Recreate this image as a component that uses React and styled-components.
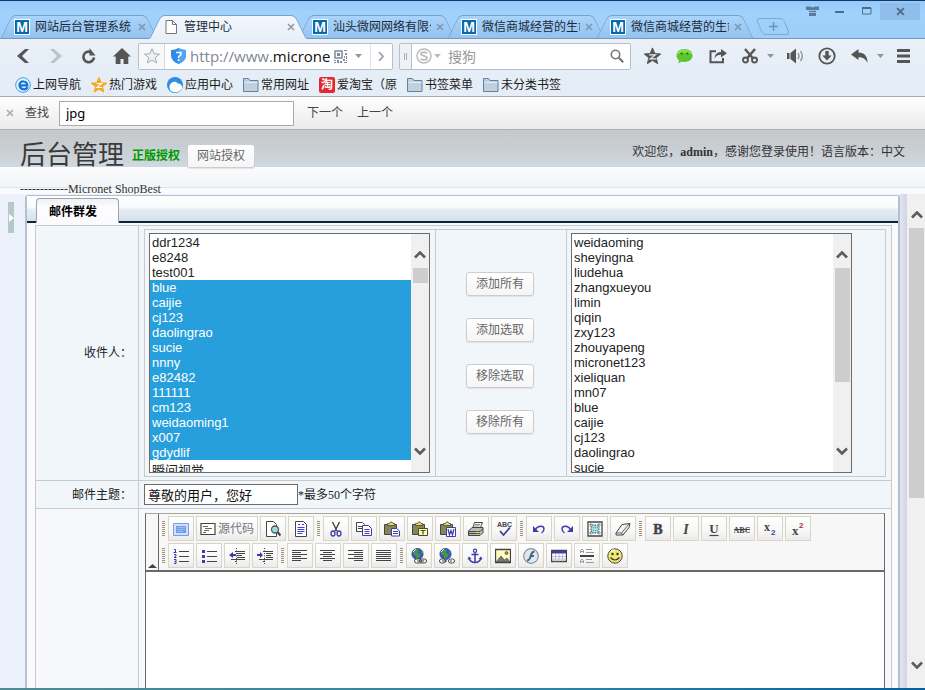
import React from "react";
import styled, { createGlobalStyle, css } from "styled-components";

const sans = '"Noto Sans", "Noto Sans CJK SC", sans-serif';
const song = '"Liberation Serif", "Noto Sans CJK SC", serif';
const arial = '"Liberation Sans", "Noto Sans CJK SC", sans-serif';

const GlobalStyle = createGlobalStyle`
  *, *::before, *::after { box-sizing: border-box; }
  body { margin: 0; font: 12px/16px ${sans}; color: #222; }
  button, input, select { font: inherit; color: inherit; margin: 0; }
  button { padding: 0; border: 0; background: none; }
  svg { display: block; flex: none; }
`;

/* ---------- browser frame ---------- */

const Window = styled.div`
  display: flex;
  flex-direction: column;
  height: 100vh;
  overflow: hidden;
  border-top: 1px solid #0b3a75;
  background: #9fcffb;
`;

const TitleBar = styled.header`
  display: flex;
  justify-content: space-between;
  align-items: flex-start;
  height: 38px;
  background: linear-gradient(#98c9f6, #a1d1fd 12px, #9dcefa);
  border-bottom: 1px solid #7898ba;
`;

const TabList = styled.nav`
  display: flex;
  align-items: flex-end;
  height: 38px;
`;

const tabFace = css`
  content: "";
  position: absolute;
  top: 0;
  bottom: 0;
  z-index: -1;
  border: 1px solid #7c9fc4;
  background: ${(p) => (p.$active ? "linear-gradient(#f2f7fd, #e9f0f8)" : "linear-gradient(#a9d4fb, #93c3f0)")};
  border-bottom-color: ${(p) => (p.$active ? "#e9f0f8" : "#7898ba")};
`;

const Tab = styled.div`
  position: relative;
  isolation: isolate;
  z-index: ${(p) => (p.$active ? 2 : 1)};
  display: flex;
  align-items: center;
  width: 158px;
  height: 24px;
  margin-right: -9px;
  padding: 0 11px 0 14px;
  color: #1c2a3a;
  &::before { ${tabFace} left: 6px; right: 40%; border-right: 0; border-top-left-radius: 5px; transform: skewX(-26deg); }
  &::after { ${tabFace} left: 40%; right: 6px; border-left: 0; border-top-right-radius: 5px; transform: skewX(26deg); }
`;

const TabTitle = styled.span`
  flex: 1;
  margin-left: 5px;
  overflow: hidden;
  white-space: nowrap;
`;

const TabClose = styled.button`
  display: flex;
  margin-left: 4px;
  padding: 1px;
`;

const Favicon = styled.span`
  width: 16px;
  height: 16px;
  border: 1px solid #fff;
  background: #0868ae;
  color: #fff;
  font: bold 14px/14px ${arial};
  text-align: center;
`;

const NewTab = styled.button`
  position: relative;
  isolation: isolate;
  display: flex;
  align-items: center;
  justify-content: center;
  width: 28px;
  height: 17px;
  margin: 0 0 4px 14px;
  &::before {
    content: "";
    position: absolute;
    inset: 0;
    z-index: -1;
    border: 1px solid #82a8d0;
    border-radius: 4px;
    transform: skewX(22deg);
  }
`;

const WindowButtons = styled.div`
  display: flex;
  align-items: center;
  height: 18px;
  padding-top: 2px;
`;

const WindowButton = styled.button`
  display: flex;
  align-items: center;
  justify-content: center;
  width: ${(p) => (p.$close ? 40 : 27)}px;
  height: 17px;
  margin-right: ${(p) => (p.$close ? 5 : 0)}px;
  background: ${(p) => (p.$close ? "#90bde9" : "transparent")};
`;

const NavBar = styled.div`
  display: flex;
  align-items: center;
  height: 34px;
  padding: 0 3px 0 6px;
  background: linear-gradient(#e9f0f8, #e5edf6);
`;

const NavButton = styled.button`
  display: flex;
  align-items: center;
  justify-content: center;
  width: 33px;
  height: 28px;
`;

const AddressBox = styled.div`
  display: flex;
  flex: 255 1 0;
  align-items: center;
  min-width: 0;
  height: 27px;
  border: 1px solid #b9bfc8;
  border-radius: 2px;
  background: #fff;
`;

const StarButton = styled.button`
  display: flex;
  align-items: center;
  justify-content: center;
  width: 26px;
  height: 25px;
  margin-right: 6px;
  border-right: 1px solid #d6dae0;
  background: #f6f8fa;
`;

const Url = styled.span`
  flex: 1;
  min-width: 0;
  margin: 0 2px 0 4px;
  overflow: hidden;
  font: 15px/24px "Open Sans", ${sans};
  white-space: nowrap;
  color: #111;
  & > i { font-style: normal; color: #808892; }
`;

const GoButton = styled.button`
  display: flex;
  align-items: center;
  justify-content: center;
  width: 22px;
  height: 25px;
  border-left: 1px solid #e0e4ea;
`;

const SearchBox = styled(AddressBox)`
  flex: 232 1 0;
  margin: 0 3px 0 6px;
`;

const SearchGrip = styled.span`
  display: flex;
  align-items: center;
  justify-content: center;
  width: 12px;
  height: 25px;
  margin-right: 4px;
  border-right: 1px solid #b9bfc8;
  background: #eef2f7;
`;

const SearchInput = styled.input`
  flex: 1;
  min-width: 0;
  height: 25px;
  padding: 0 4px;
  border: 0;
  outline: 0;
  background: none;
  font: 14px/20px ${sans};
  &::placeholder { color: #999; opacity: 1; }
`;

const Tools = styled.div`
  display: flex;
  align-items: center;
`;

const ToolButton = styled.button`
  display: flex;
  align-items: center;
  justify-content: center;
  width: ${(p) => p.$width || 33}px;
  height: 28px;
`;

const Bookmarks = styled.nav`
  display: flex;
  align-items: center;
  gap: 10px;
  height: 24px;
  padding-left: 15px;
  background: #e5edf6;
  border-bottom: 1px solid #a8abb0;
`;

const Bookmark = styled.a`
  display: flex;
  align-items: center;
  gap: 2px;
  color: #1b1b1b;
  text-decoration: none;
  white-space: nowrap;
`;

const TaoBadge = styled.span`
  width: 16px;
  height: 16px;
  border-radius: 2px;
  background: #e12a30;
  color: #fff;
  font-weight: bold;
  text-align: center;
`;

const FindBar = styled.form`
  display: flex;
  align-items: center;
  height: 33px;
  padding-left: 1px;
  background: linear-gradient(#fefefe, #ebebeb);
  border-bottom: 1px solid #adadad;
  color: #444;
`;

const FindLabel = styled.label`
  margin: 0 10px;
`;

const FindInput = styled.input`
  width: 235px;
  height: 25px;
  margin-right: 13px;
  padding: 0 6px;
  border: 1px solid #aaa;
  background: #fff;
  color: #000;
  font: 13px/20px ${sans};
`;

const FindButton = styled.button`
  margin-right: 14px;
`;

/* ---------- page ---------- */

const PageHeader = styled.header`
  display: flex;
  justify-content: space-between;
  height: 64px;
  padding: 0 20px;
  background: linear-gradient(
    #c5c9cc 0, #c8cdd1 16px, #d0d9e1 37px, #fbfcfd 37px, #f3f4f7 57px,
    #dfe5ec 57px, #dfe5ec 58px, #f8fafd 58px
  );
  font: 12px/16px ${song};
  color: #333;
`;

const BrandRow = styled.div`
  display: flex;
  align-items: flex-end;
  height: 38px;
  margin-bottom: 14px;
`;

const Brand = styled.h1`
  margin: 0 8px 0 0;
  font: 26px/24px ${song};
  color: #3a3a3a;
`;

const Genuine = styled.strong`
  margin-right: 7px;
  padding-bottom: 4px;
  color: #009a00;
`;

const SoftButton = styled.button`
  width: 68px;
  height: 24px;
  border: 1px solid #cbced1;
  border-radius: 3px;
  background: linear-gradient(#fff, #f5f5f5);
  box-shadow: 0 1px 1px #e2e4e6;
  color: #666;
  font: 12px/16px ${song};
`;

const Caption = styled.div`
  line-height: 14px;
`;

const Welcome = styled.p`
  margin: 14px 0 0;
`;

const Body = styled.div`
  display: flex;
  flex: 1;
  min-height: 0;
  background: #edf1fb;
`;

const Sidebar = styled.aside`
  width: 25px;
  padding: 8px 0 0 8px;
`;

const SidebarHandle = styled.button`
  display: flex;
  align-items: center;
  justify-content: flex-end;
  width: 6px;
  height: 31px;
  background: #b5c9c8;
`;

const Panel = styled.main`
  display: flex;
  flex-direction: column;
  flex: 1;
  min-width: 0;
  margin-top: 1px;
  border: 1px solid #b4c0d2;
  border-width: 1px 2px 0;
  border-radius: 3px 3px 0 0;
  background: #fafafb;
`;

const PanelTabs = styled.div`
  display: flex;
  align-items: flex-end;
  height: 27px;
  padding-left: 9px;
  background: linear-gradient(#fff 0, #f7fbfd 12px, #e7eef3 13px, #d3e0ec 25px, #0b2338 25px);
`;

const PanelTab = styled.h2`
  width: 83px;
  height: 25px;
  margin: 0;
  padding: 5px 0 0 12px;
  border: 1px solid #9aa3ae;
  border-bottom: 0;
  border-radius: 4px 4px 0 0;
  background: linear-gradient(#f1f1f5, #fcfcff 8px);
  font: bold 12px/16px ${song};
  color: #000;
`;

const Form = styled.form`
  display: flex;
  flex-direction: column;
  flex: 1;
  min-height: 0;
  margin: 2px 6px 0 8px;
  border: 1px solid #c9cacc;
  border-bottom: 0;
  font: 12px/16px ${song};
`;

const FormRow = styled.div`
  display: grid;
  grid-template-columns: 103px minmax(0, 1fr);
  min-height: ${(p) => p.$height || 0}px;
  flex: ${(p) => (p.$grow ? 1 : "none")};
  border-bottom: ${(p) => (p.$grow ? 0 : 1)}px solid #c9cacc;
  background: ${(p) => (p.$grow ? "#f7f8fb" : "#f0f6fa")};
`;

const LabelCell = styled.div`
  display: flex;
  align-items: center;
  justify-content: flex-end;
  padding-right: 6px;
  border-right: 1px solid #c9cacc;
`;

const FieldCell = styled.div`
  display: flex;
  align-items: ${(p) => (p.$center ? "center" : "stretch")};
  padding: ${(p) => p.$pad};
`;

const PickGrid = styled.div`
  flex: 1;
  display: grid;
  grid-template-columns: 291px 131px minmax(0, 1fr);
  border: 1px solid #c9cacc;
`;

const PickCell = styled.div`
  display: flex;
  flex-direction: column;
  justify-content: center;
  align-items: ${(p) => (p.$center ? "center" : "flex-start")};
  gap: 22px;
  padding: ${(p) => (p.$center ? "3px 6px 3px 4px" : "3px 4px")};
  border-right: ${(p) => (p.$last ? 0 : 1)}px solid #c9cacc;
`;

const ListFrame = styled.div`
  display: flex;
  width: 281px;
  height: 240px;
  border: 1px solid #6b6b6b;
  background: #fff;
`;

const List = styled.select`
  flex: 1;
  min-width: 0;
  padding: 1px 0;
  border: 0;
  border-radius: 0;
  outline: 0;
  overflow: hidden;
  scrollbar-width: none;
  background: #fff;
  font: 13px/15px ${arial};
  color: #222;
  option {
    min-height: 15px;
    height: 15px;
    padding: 0 2px;
    line-height: 15px;
  }
  option:checked {
    background: linear-gradient(#279fdc, #279fdc);
    color: #fff;
    -webkit-text-fill-color: #fff;
  }
`;

const ScrollTrack = styled.div`
  display: flex;
  flex-direction: column;
  align-items: center;
  width: ${(p) => p.$width}px;
  padding: ${(p) => p.$pad};
  background: #f0f0f0;
`;

const ScrollThumb = styled.div`
  width: 15px;
  height: ${(p) => p.$height}px;
  margin: 9px 0 auto;
  background: #cdcdcd;
`;

const SubjectInput = styled.input`
  width: 154px;
  height: 21px;
  padding: 0 3px;
  border: 1px solid #6b6b6b;
  background: #fff;
  color: #111;
  font: 13px/16px ${song};
`;

const Editor = styled.div`
  flex: 1;
  display: flex;
  flex-direction: column;
  border: 1px solid #696969;
  border-top-color: #a8a89a;
  border-bottom: 0;
`;

const EditorHead = styled.div`
  display: flex;
  background: #f7f7f7;
  border-bottom: 2px solid #6c6a68;
`;

const Collapse = styled.button`
  display: flex;
  align-items: flex-end;
  justify-content: center;
  width: 13px;
  padding-bottom: 2px;
  border-right: 1px solid #696969;
`;

const ToolRows = styled.div`
  display: grid;
  gap: 2px;
  padding: 2px;
`;

const ToolRow = styled.div`
  display: flex;
  flex-wrap: wrap;
  align-items: center;
  gap: 2px;
`;

const Grip = styled.span`
  width: 3px;
  height: 15px;
  margin: 0 1px;
  background: repeating-linear-gradient(#9d9471 0, #9d9471 1px, transparent 1px, transparent 2px);
`;

const EditButton = styled.button`
  display: flex;
  align-items: center;
  justify-content: center;
  gap: 2px;
  min-width: 26px;
  height: 25px;
  padding: 0 3px;
  border: 1px solid #d9d5c7;
  background: linear-gradient(#fff, #f7f7f7 60%, #ebebeb);
  color: #777;
`;

const WritingArea = styled.div`
  flex: 1;
  background: #fff;
  outline: 0;
`;

const PageEdge = styled.div`
  width: 7px;
  background: linear-gradient(90deg, #e2e5f0, #cfd5e6);
`;

const BottomEdge = styled.div`
  height: 2px;
  background: linear-gradient(90deg, #4f8b92, #2c84a4 60%, #07609c);
`;

/* ---------- drawings ---------- */

const Icon = ({ w = 16, h = 16, vb, children }) => (
  <svg width={w} height={h} viewBox={vb || `0 0 ${w} ${h}`} fill="none" aria-hidden="true">
    {children}
  </svg>
);

const CrossIcon = ({ size = 8, color = "#7d97b2" }) => (
  <Icon w={size} h={size} vb="0 0 8 8"><path d="M1 1l6 6M7 1L1 7" stroke={color} strokeWidth="1.6" /></Icon>
);
const CaretIcon = ({ color = "#8d97a5" }) => (
  <Icon w={7} h={4}><path d="M0 0h7L3.5 4z" fill={color} /></Icon>
);
const PageIcon = () => (
  <Icon><path d="M3 1.5h6.5l4 4V14.500h-10.500z" fill="#fff" stroke="#777" /><path d="M9.500 1.500v4h4" stroke="#777" /></Icon>
);
const ArrowIcon = ({ flip, color }) => (
  <Icon w={14} h={16}>
    <path d={flip ? "M1 1h4l8 7-8 7H1l7-7z" : "M13 1H9L1 8l8 7h4L6 8z"} fill={color} />
  </Icon>
);
const ReloadIcon = () => (
  <Icon><path d="M13 9.500A5.300 5.300 0 1 1 9.500 3.900" stroke="#555" strokeWidth="2.600" /><path d="M8.500 0v7.500h6z" fill="#555" /></Icon>
);
const HomeIcon = () => (
  <Icon w={18} h={16}><path d="M9 0l9 8.500h-2.700V16h-4.800v-5H7.500v5H2.700V8.500H0z" fill="#555" /></Icon>
);
const STAR = "M8 .8l2.100 5 5.300.4-4.100 3.400 1.300 5.200L8 12l-4.600 2.800 1.300-5.200L.6 6.200l5.300-.4z";
const ShieldIcon = () => (
  <Icon w={15} h={16}><path d="M0 2Q4 2 7.500 0 11 2 15 2v5c0 4.500-3 7-7.500 9C3 14 0 11.500 0 7z" fill="#2f8be6" /><path d="M7.500 0Q11 2 15 2v5c0 4.500-3 7-7.500 9z" fill="#4fa6f4" /><path d="M5 4.500h5v2L7.500 9v1M7.500 11v2" stroke="#fff" strokeWidth="1.500" /></Icon>
);
const QrIcon = () => (
  <Icon w={13} h={13}>
    <path d="M1 1h7v7H1z" stroke="#7e8a99" strokeWidth="1.500" /><path d="M3 3h3v3H3z" fill="#7e8a99" />
    <path d="M10 0h3v1h-3zM11 3h2v2h-2zM10 6h1v2h-1zM12 6h1v3h-1zM0 10h2v1H0zM3 10h2v3H3zM0 12h2v1H0zM6 11h2v2H6zM9 9h2v2H9zM10 12h3v1h-3zM12 10h1v1h-1z" fill="#7e8a99" />
  </Icon>
);
const SogouIcon = () => (
  <Icon><circle cx="8" cy="8" r="7" stroke="#bbb" strokeWidth="1.500" /><path d="M11 5C9 3.800 5 4 5 6s6 1.800 6 4-4 2.300-6.300.900" stroke="#bbb" strokeWidth="1.800" /></Icon>
);
const MagnifierIcon = () => (
  <Icon w={14} h={14}><circle cx="5.500" cy="5.500" r="4.200" stroke="#777" strokeWidth="1.600" /><path d="M8.800 8.800l4.400 4.400" stroke="#777" strokeWidth="2.200" /></Icon>
);
const StarZIcon = () => (
  <Icon w={19} h={18} vb="0 0 16 16"><path d={STAR} fill="#555" stroke="#555" strokeWidth=".8" /><path d="M5 7h5.500L6 10.500h5.500" stroke="#e7eef7" strokeWidth="1.100" /></Icon>
);
const WechatIcon = () => (
  <Icon w={17} h={16}><path d="M8.500 1C13 1 16.500 3.800 16.500 7.500S13 14 8.500 14c-1 0-2-.1-3-.5L2.500 15.500l.4-3.400C1.300 11 .5 9.300.5 7.500.5 3.800 4 1 8.500 1z" fill="#5cc72c" /><path d="M8.500 1.500c4 0 7 2 7.500 5C12 4 5 4 1 6.500c.5-3 3.500-5 7.500-5z" fill="#85dc58" /><circle cx="5.500" cy="5.500" r="1" fill="#205a10" /><circle cx="11.500" cy="5.500" r="1" fill="#205a10" /></Icon>
);
const ShareIcon = () => (
  <Icon w={18} h={16}><path d="M7 3.200H1.500v11h12.500V10" stroke="#555" strokeWidth="2" /><path d="M5.500 10.500C6 6 8.500 4 12 4V1l6 4.300L12 9.500V6.800c-3 0-5 1-6.500 3.700z" fill="#555" /></Icon>
);
const ScissorsIcon = () => (
  <Icon><path d="M3 1l8.500 10M13 1L4.500 11" stroke="#555" strokeWidth="2.400" /><circle cx="3.500" cy="12" r="2.500" stroke="#555" strokeWidth="1.900" /><circle cx="12.500" cy="12" r="2.500" stroke="#555" strokeWidth="1.900" /></Icon>
);
const SpeakerIcon = () => (
  <Icon w={17} h={16}><path d="M0 5h2.500v6H0zM3.500 5L9 .5v15L3.500 11z" fill="#555" /><path d="M11 5q2 3 0 6M13.500 3q3.500 5 0 10" stroke="#888" strokeWidth="1.300" /></Icon>
);
const DownloadIcon = () => (
  <Icon w={18} h={18}><circle cx="9" cy="9" r="7.700" stroke="#555" strokeWidth="1.800" /><path d="M7.300 4h3.400v4.500h3L9 13.500 4.300 8.500h3z" fill="#555" /></Icon>
);
const ReplyIcon = () => (
  <Icon w={17} h={14}><path d="M0 5.500L7.500 0v3.500c6 0 9 4 9 10.500C14.500 10 12 8.300 7.500 8.300V11z" fill="#555" /></Icon>
);
const MenuIcon = () => (
  <Icon w={13} h={14}><path d="M0 1.500h13M0 7h13M0 12.500h13" stroke="#555" strokeWidth="3" /></Icon>
);
const ShirtIcon = () => (
  <Icon w={13} h={10}><path d="M0 0.500h4l2.500 1 2.500-1h4V4h-3v6H3V4H0z" fill="#5c7a99" /><path d="M3 4.500h7M3 6.500h7" stroke="#9fcffb" strokeWidth=".8" /></Icon>
);
const ExplorerIcon = () => (
  <Icon><circle cx="8" cy="8" r="7.300" fill="#e8f5fd" stroke="#3a9be8" /><path d="M12.500 10c-1.500 3.500-8 3-8-2s7.500-4.500 7.800.3H5" stroke="#1571d6" strokeWidth="2.200" /></Icon>
);
const GameStarIcon = () => (
  <Icon><path d={STAR} fill="#f7a81e" stroke="#f7a81e" strokeWidth="1.200" strokeLinejoin="round" /><path d="M5.500 6.500h5L6 10.500h5" stroke="#fff" strokeWidth="1.200" /></Icon>
);
const CloudIcon = () => (
  <Icon><circle cx="8" cy="8" r="8" fill="#2b8de4" /><path d="M2.500 10c0-5 6-7 8.500-3.500 3 0 4.500 2.500 4 5-2 4-8 5-11.500 2-1-1-1-2.500-1-3.500z" fill="#fff" /></Icon>
);
const FolderIcon = () => (
  <Icon><path d="M.5 14.500v-13h5l1.500 2h8v11z" fill="#bfd0df" stroke="#66809a" /><path d="M1.500 5.500h13" stroke="#e3edf5" /></Icon>
);
const Chevron = ({ down }) => (
  <Icon w={12} h={8}><path d={down ? "M1 1.500l5 5 5-5" : "M1 6.500l5-5 5 5"} stroke="#5c5c5c" strokeWidth="2.600" /></Icon>
);

/* editor drawings, all on a 16 x 16 grid */
const ink = "#444";
const blue = "#3d3da8";
const lines = (rows) => rows.map(([x1, x2, y]) => `M${x1} ${y}.5H${x2}`).join("");
const clip = (
  <>
    <path d="M.5 3.500h12v10H.5z" fill="#85855a" stroke={ink} />
    <path d="M3.500 4.500v-2h2l1-1.500h1.500l1 1.500h1.500v2z" fill="#e8e23a" stroke={ink} strokeWidth=".8" />
  </>
);
const globe = (
  <>
    <circle cx="6.500" cy="6" r="5.700" fill="#3d4fd0" stroke="#33406a" strokeWidth=".6" />
    <path d="M2 3l3-2 3 1-1 3 3 1-2 4-3 1V8L2 6zM10 2l2 3-2 1z" fill="#3f9a46" />
    <path d="M2 4l3-3" stroke="#cfe6ff" />
  </>
);
const align = (short) => lines([[0, 15, 2], [short[0], short[1], 4], [0, 15, 6], [short[0], short[1], 8], [0, 15, 10], [short[0], short[1], 12]]);

const art = {
  full: <><path d="M.5 2.500h15v12H.5z" fill="#cfe0fa" stroke="#7d9be0" /><path d="M3 5h10v7H3z" fill="#6f9be8" /><path d="M4 6.500h8M4 8.500h8M4 10.500h6" stroke="#9dbcf2" /></>,
  source: <><path d="M1 2.500h14v11H1z" fill="#fff" stroke="#444" strokeWidth="1.200" /><path d={lines([[3, 8, 5], [5, 12, 7], [4, 9, 9], [3, 6, 11]])} stroke="#666" /></>,
  preview: <><path d="M1.500.5h7l3 3v12h-10z" fill="#fff" stroke={ink} /><circle cx="10" cy="8.500" r="3.500" fill="#9bdcdf" stroke="#555" strokeWidth="1.300" /><path d="M12.500 11l3 3.500" stroke={ink} strokeWidth="2" /></>,
  template: <><path d="M2.500.5h8l3 3v12h-11z" fill="#fff" stroke={ink} /><path d="M5 3.500h2M9 3.500h2M4.500 6.500h7M4.500 8.500h7M4.500 10.500h7M4.500 12.500h5" stroke="#3a3ae0" strokeWidth="1.200" /></>,
  cut: <><path d="M4.500 1l4.500 9M11.500 1L7 10" stroke={ink} strokeWidth="1.400" /><ellipse cx="5" cy="12.500" rx="2" ry="2.500" stroke={blue} strokeWidth="1.300" /><ellipse cx="11" cy="12.500" rx="2" ry="2.500" stroke={blue} strokeWidth="1.300" /></>,
  copy: <><path d="M.5 1.500h6l2 2v7h-8z" fill="#fff" stroke={ink} /><path d="M2 5.500h4M2 7.500h4" stroke={ink} /><path d="M6.500 4.500h6l3 3v7h-9z" fill="#fff" stroke={blue} /><path d="M8.500 8.500h5M8.500 10.500h5M8.500 12.500h5" stroke={blue} /></>,
  paste: <>{clip}<path d="M7.500 7.500h5l3 2.500v5h-8z" fill="#fff" stroke={blue} /><path d="M9 10.500h5M9 12.500h5" stroke={blue} /></>,
  pasteText: <>{clip}<path d="M6.500 7.500h9v7h-9z" fill="#ffff9c" stroke={ink} /><path d="M8.500 9.500h5M11 9.500v4" stroke={ink} strokeWidth="1.200" /></>,
  pasteWord: <>{clip}<path d="M6.500 6.500h9v9h-9z" fill="#fff" stroke={blue} /><path d="M8 8l1.500 6L11 9.500l1.500 4.500L14 8" stroke={blue} strokeWidth="1.200" /></>,
  print: <><path d="M5 6.500l1.500-5h8l-2 5" fill="#fff" stroke={ink} /><path d="M.5 10l3.500-3.500h11v5l-3 3H.5z" fill="#bbb" stroke={ink} /><path d="M1 10.500h11l3-3M1 12.500h11" stroke={ink} /><path d="M8 11.500h3" stroke="#e6e020" strokeWidth="1.500" /><path d="M7 3.500h5M6.500 5h5" stroke="#888" /></>,
  spell: <><text x="1" y="6" fontSize="7" fontFamily="Liberation Sans" fontWeight="bold" fill={ink}>ABC</text><path d="M4 10l3.500 4L14 6.500" stroke={blue} strokeWidth="1.800" /></>,
  undo: <><path d="M4.500 8.500C7 4 13 4.500 13 8c0 2-1 3-2.500 4" stroke={blue} strokeWidth="1.400" /><path d="M2 5v6h6z" fill={blue} /></>,
  redo: <><path d="M11.500 8.500C9 4 3 4.500 3 8c0 2 1 3 2.500 4" stroke={blue} strokeWidth="1.400" /><path d="M14 5v6H8z" fill={blue} /></>,
  selectAll: <><path d="M1 1h14v14H1z" fill="#fff" stroke={ink} strokeWidth="1.300" /><path d="M4 4h8v8H4z" fill="#9fdede" /><path d="M2.500 4h11M2.500 12h11M4 2.500v11M12 2.500v11" stroke={ink} strokeDasharray="1.500 1" /><path d="M4 6.500h8M4 9.500h8" stroke="#5fa9ab" strokeDasharray="1 1" /></>,
  eraser: <><path d="M1 12l6-8.500 8-1-1 4-6 7.500H1z" fill="#f2f2f2" stroke={ink} /><path d="M1 12h5.500L14 3M6.500 12l1 2" stroke={ink} strokeWidth=".8" /></>,
  numbered: <><path d={lines([[6, 16, 3], [6, 16, 8], [6, 16, 13]])} stroke={ink} strokeWidth="1.200" /><path d="M1 1.500h1.500V4M.5 4.500h3M1 6.500h2v1.500L1 9.500h2.500M1 11.500h2v4H1M1.500 13.500H3" stroke={blue} /></>,
  bullets: <><path d={lines([[6, 16, 3], [6, 16, 8], [6, 16, 13]])} stroke={ink} strokeWidth="1.200" /><path d="M1 2h3v3H1zM1 7h3v3H1zM1 12h3v3H1z" fill={blue} /></>,
  outdent: <><path d={lines([[6, 16, 3], [8, 16, 5], [8, 13, 7], [8, 16, 9], [2, 16, 11], [6, 8, 13]])} stroke={ink} strokeWidth="1.200" /><path d="M7.500 0v16" stroke={ink} strokeDasharray="1 1.500" /><path d="M0 7l4-3v2h3v2H4v2z" fill={blue} /></>,
  indent: <><path d={lines([[6, 16, 3], [9, 16, 5], [9, 14, 7], [9, 16, 9], [2, 16, 11], [6, 8, 13]])} stroke={ink} strokeWidth="1.200" /><path d="M7.500 0v16" stroke={ink} strokeDasharray="1 1.500" /><path d="M6 7L3 4v2H0v2h3v2z" fill={blue} /></>,
  left: <path d={align([0, 9])} stroke={ink} strokeWidth="1.200" />,
  center: <path d={align([3, 12])} stroke={ink} strokeWidth="1.200" />,
  right: <path d={align([6, 15])} stroke={ink} strokeWidth="1.200" />,
  justify: <path d={align([0, 15])} stroke={ink} strokeWidth="1.200" />,
  link: <>{globe}<rect x="3.500" y="11" width="7" height="4" rx="2" fill="#fff" stroke={ink} /><rect x="8.500" y="11" width="7" height="4" rx="2" stroke={ink} /><path d="M6 13h7" stroke={ink} /></>,
  unlink: <>{globe}<rect x=".5" y="11" width="6" height="4" rx="2" fill="#fff" stroke={ink} /><rect x="9.500" y="11" width="6" height="4" rx="2" fill="#fff" stroke={ink} /><path d="M3 13h5M11 13h2" stroke={ink} /></>,
  anchor: <><circle cx="8" cy="2.800" r="1.600" stroke={blue} strokeWidth="1.200" /><path d="M8 4.500V14M4.500 6.500h7M2 9.500c0 3 3 5 6 5s6-2 6-5" stroke={blue} strokeWidth="1.500" /><path d="M.5 11.500L2 8.500l2.500 2.500zM15.500 11.500L14 8.500 11.500 11z" fill={blue} /></>,
  image: <><path d="M.5 1.500h15v13H.5z" fill="#fffcc0" stroke={ink} strokeWidth="1.300" /><circle cx="11.500" cy="5" r="1.500" fill="#8a8a40" stroke={ink} strokeWidth=".6" /><path d="M1 14l5-6 3.500 4 2.500-2 3 4z" fill="#777" stroke={ink} strokeWidth=".6" /></>,
  flash: <><circle cx="8" cy="8" r="7.300" fill="#dfe8ee" stroke="#8296a4" strokeWidth="1.200" /><path d="M11.500 3.500C8 3.500 8 8 7 10c-.6 1.500-1.500 2.500-3 2.500M7 8h4" stroke="#4a6478" strokeWidth="2" /></>,
  table: <><path d="M.5 2.500h15v11H.5z" fill="#fff" stroke={ink} strokeWidth="1.300" /><path d="M1 3h14v2.500H1z" fill={blue} /><path d="M1 8.500h14M1 11h14M4.500 6v7.500M8 6v7.500M11.500 6v7.500" stroke="#bcbcd0" /></>,
  rule: <><path d="M1 8h14" stroke={ink} strokeWidth="2" /><path d="M7 1.500h6M7 4.500h8M7 11.500h6M7 14.500h8" stroke="#999" /><path d="M1.500 5V2.500L3 1l1.500 1.500V5M1.500 3.500h3M1.500 15v-2.500L3 11l1.500 1.500V15M1.500 13.500h3" stroke="#999" /></>,
  smiley: <><circle cx="8" cy="8" r="7.200" fill="#ecea72" stroke="#444" /><path d="M4 3.500Q6 2 8 2.500" stroke="#ffffc8" strokeWidth="1.500" /><circle cx="5.500" cy="6" r="1.200" fill="#333" /><circle cx="10.500" cy="6" r="1.200" fill="#333" /><path d="M3.500 9.500q4.500 5 9 0" stroke="#333" strokeWidth="1.200" /></>,
  bold: <text x="8" y="13" textAnchor="middle" fontSize="14" fontFamily="Liberation Serif" fontWeight="bold" fill={ink} stroke={ink} strokeWidth=".5">B</text>,
  italic: <text x="8" y="13" textAnchor="middle" fontSize="14" fontFamily="Liberation Serif" fontWeight="bold" fontStyle="italic" fill={ink}>I</text>,
  underline: <><text x="8" y="12" textAnchor="middle" fontSize="13" fontFamily="Liberation Serif" fontWeight="bold" fill={ink}>U</text><path d="M3.500 14.500h9" stroke={ink} strokeWidth="1.200" /></>,
  strike: <><text x="8" y="12" textAnchor="middle" fontSize="8" fontFamily="Liberation Serif" fontWeight="bold" fill={ink}>ABC</text><path d="M0 8.500h16" stroke={ink} /></>,
  sub: <><text x="2" y="10" fontSize="12" fontFamily="Liberation Serif" fontWeight="bold" fill={ink}>x</text><text x="9" y="14" fontSize="8" fontFamily="Liberation Sans" fontWeight="bold" fill={blue}>2</text></>,
  sup: <><text x="2" y="14" fontSize="13" fontFamily="Liberation Serif" fontWeight="bold" fill={ink}>x</text><text x="9" y="7" fontSize="8" fontFamily="Liberation Sans" fontWeight="bold" fill="#b02a38">2</text></>,
};

/* ---------- data ---------- */

const tabs = [
  { title: "网站后台管理系统" },
  { title: "管理中心", active: true },
  { title: "汕头微网网络有限公" },
  { title: "微信商城经营的生命" },
  { title: "微信商城经营的生命" },
];

const bookmarks = [
  ["上网导航", <ExplorerIcon />],
  ["热门游戏", <GameStarIcon />],
  ["应用中心", <CloudIcon />],
  ["常用网址", <FolderIcon />],
  ["爱淘宝（原", <TaoBadge>淘</TaoBadge>],
  ["书签菜单", <FolderIcon />],
  ["未分类书签", <FolderIcon />],
];

const chosen = [
  "blue", "caijie", "cj123", "daolingrao", "sucie", "nnny", "e82482", "111111",
  "cm123", "weidaoming1", "x007", "gdydlif",
];
const members = ["ddr1234", "e8248", "test001", ...chosen, "瞬间视觉"];
const recipients = [
  "weidaoming", "sheyingna", "liudehua", "zhangxueyou", "limin", "qiqin", "zxy123", "zhouyapeng",
  "micronet123", "xieliquan", "mn07", "blue", "caijie", "cj123", "daolingrao", "sucie",
];

const moves = ["添加所有", "添加选取", "移除选取", "移除所有"];

const toolbar = [
  [
    ["full", "source", "preview", "template"],
    ["cut", "copy", "paste", "pasteText", "pasteWord", "print", "spell"],
    ["undo", "redo", "selectAll", "eraser"],
    ["bold", "italic", "underline", "strike", "sub", "sup"],
  ],
  [
    ["numbered", "bullets", "outdent", "indent"],
    ["left", "center", "right", "justify"],
    ["link", "unlink", "anchor", "image", "flash", "table", "rule", "smiley"],
  ],
];

/* ---------- parts ---------- */

const ScrollBar = ({ width, pad, thumb }) => (
  <ScrollTrack $width={width} $pad={pad}>
    <Chevron />
    <ScrollThumb $height={thumb} />
    <Chevron down />
  </ScrollTrack>
);

const ListBox = ({ label, items, selected, thumb }) => (
  <ListFrame>
    <List multiple size={16} aria-label={label} defaultValue={selected}>
      {items.map((name) => <option key={name} value={name}>{name}</option>)}
    </List>
    <ScrollBar width={18} pad="17px 0" thumb={thumb} />
  </ListFrame>
);

function BrowserChrome() {
  return (
    <>
      <TitleBar>
        <TabList>
          {tabs.map((tab, i) => (
            <Tab key={i} $active={tab.active}>
              {tab.active ? <PageIcon /> : <Favicon>M</Favicon>}
              <TabTitle>{tab.title}</TabTitle>
              <TabClose type="button" aria-label="关闭标签页"><CrossIcon color={tab.active ? "#999" : undefined} /></TabClose>
            </Tab>
          ))}
          <NewTab type="button" aria-label="新建标签页">
            <Icon w={9} h={9}><path d="M4.500 0v9M0 4.500h9" stroke="#6f93b8" strokeWidth="1.500" /></Icon>
          </NewTab>
        </TabList>
        <WindowButtons>
          <WindowButton type="button" aria-label="皮肤"><ShirtIcon /></WindowButton>
          <WindowButton type="button" aria-label="最小化"><Icon w={9} h={10}><path d="M0 6h9" stroke="#4e6b8a" strokeWidth="2" /></Icon></WindowButton>
          <WindowButton type="button" aria-label="最大化"><Icon w={10} h={8}><path d="M.5 1h8.500v6H.5z" stroke="#4e6b8a" /><path d="M0 1h9" stroke="#4e6b8a" strokeWidth="2" /></Icon></WindowButton>
          <WindowButton type="button" aria-label="关闭" $close><CrossIcon size={9} color="#4e6b8a" /></WindowButton>
        </WindowButtons>
      </TitleBar>

      <NavBar>
        <NavButton type="button" aria-label="后退"><ArrowIcon color="#555" /></NavButton>
        <NavButton type="button" aria-label="前进"><ArrowIcon flip color="#bcc2ca" /></NavButton>
        <NavButton type="button" aria-label="刷新"><ReloadIcon /></NavButton>
        <NavButton type="button" aria-label="主页"><HomeIcon /></NavButton>
        <AddressBox>
          <StarButton type="button" aria-label="收藏"><Icon><path d={STAR} fill="#f0f1f3" stroke="#a4a8ae" /></Icon></StarButton>
          <ShieldIcon />
          <Url><i>http://www.</i>microne</Url>
          <QrIcon />
          <ToolButton type="button" aria-label="历史" $width={23}><CaretIcon /></ToolButton>
          <GoButton type="button" aria-label="转到"><Icon w={6} h={9}><path d="M1 0l4 4.500L1 9" stroke="#9aa3b0" strokeWidth="1.800" /></Icon></GoButton>
        </AddressBox>
        <SearchBox>
          <SearchGrip><Icon w={3} h={7}><path d="M.5 0v7M2.500 0v7" stroke="#a8aeb7" /></Icon></SearchGrip>
          <SogouIcon />
          <ToolButton type="button" aria-label="搜索引擎" $width={12}><CaretIcon color="#bbb" /></ToolButton>
          <SearchInput aria-label="搜狗" placeholder="搜狗" />
          <ToolButton type="button" aria-label="搜索" $width={26}><MagnifierIcon /></ToolButton>
        </SearchBox>
        <Tools>
          <ToolButton type="button" aria-label="空间" $width={36}><StarZIcon /></ToolButton>
          <ToolButton type="button" aria-label="微信" $width={28}><WechatIcon /></ToolButton>
          <ToolButton type="button" aria-label="分享" $width={40}><ShareIcon /></ToolButton>
          <ToolButton type="button" aria-label="截图" $width={24}><ScissorsIcon /></ToolButton>
          <ToolButton type="button" aria-label="截图选项" $width={16}><CaretIcon /></ToolButton>
          <ToolButton type="button" aria-label="声音" $width={34}><SpeakerIcon /></ToolButton>
          <ToolButton type="button" aria-label="下载" $width={30}><DownloadIcon /></ToolButton>
          <ToolButton type="button" aria-label="恢复" $width={34}><ReplyIcon /></ToolButton>
          <ToolButton type="button" aria-label="恢复选项" $width={8}><CaretIcon /></ToolButton>
          <ToolButton type="button" aria-label="菜单" $width={38}><MenuIcon /></ToolButton>
        </Tools>
      </NavBar>

      <Bookmarks>
        {bookmarks.map(([text, icon]) => <Bookmark key={text} href="#">{icon}{text}</Bookmark>)}
      </Bookmarks>

      <FindBar>
        <TabClose type="button" aria-label="关闭查找"><CrossIcon color="#aaa" /></TabClose>
        <FindLabel htmlFor="find">查找</FindLabel>
        <FindInput id="find" defaultValue="jpg" />
        <FindButton type="button">下一个</FindButton>
        <FindButton type="button">上一个</FindButton>
      </FindBar>
    </>
  );
}

const EditorToolbar = () => (
  <EditorHead>
    <Collapse type="button" aria-label="收起工具栏"><Icon w={9} h={4}><path d="M4.500 0L9 4H0z" fill="#4d4035" /></Icon></Collapse>
    <ToolRows>
      {toolbar.map((groups, r) => (
        <ToolRow key={r}>
          {groups.map((names) => (
            <React.Fragment key={names[0]}>
              <Grip />
              {names.map((name) => (
                <EditButton key={name} type="button" aria-label={name === "source" ? undefined : name}>
                  <Icon>{art[name]}</Icon>
                  {name === "source" && "源代码"}
                </EditButton>
              ))}
            </React.Fragment>
          ))}
        </ToolRow>
      ))}
    </ToolRows>
  </EditorHead>
);

export default function App() {
  return (
    <Window>
      <GlobalStyle />
      <BrowserChrome />

      <PageHeader>
        <div>
          <BrandRow>
            <Brand>后台管理</Brand>
            <Genuine>正版授权</Genuine>
            <SoftButton type="button">网站授权</SoftButton>
          </BrandRow>
          <Caption>------------Micronet ShopBest</Caption>
        </div>
        <Welcome>欢迎您，<b>admin</b>，感谢您登录使用！语言版本：中文</Welcome>
      </PageHeader>

      <Body>
        <Sidebar>
          <SidebarHandle type="button" aria-label="展开侧栏"><Icon w={5} h={8}><path d="M0 0l5 4-5 4z" fill="#fff" /></Icon></SidebarHandle>
        </Sidebar>
        <Panel>
          <PanelTabs><PanelTab>邮件群发</PanelTab></PanelTabs>
          <Form>
            <FormRow $height={255}>
              <LabelCell>收件人：</LabelCell>
              <FieldCell $pad="3px 5px">
                <PickGrid>
                  <PickCell><ListBox label="会员" items={members} selected={chosen} thumb={15} /></PickCell>
                  <PickCell $center>
                    {moves.map((text) => <SoftButton key={text} type="button">{text}</SoftButton>)}
                  </PickCell>
                  <PickCell $last><ListBox label="收件人" items={recipients} selected={[]} thumb={114} /></PickCell>
                </PickGrid>
              </FieldCell>
            </FormRow>
            <FormRow $height={28}>
              <LabelCell as="label" htmlFor="subject">邮件主题：</LabelCell>
              <FieldCell $center $pad="0 5px">
                <SubjectInput id="subject" defaultValue="尊敬的用户，您好" />
                <span>*最多50个字符</span>
              </FieldCell>
            </FormRow>
            <FormRow $grow>
              <LabelCell />
              <FieldCell $pad="4px 6px 0">
                <Editor>
                  <EditorToolbar />
                  <WritingArea contentEditable suppressContentEditableWarning role="textbox" aria-label="邮件内容" />
                </Editor>
              </FieldCell>
            </FormRow>
          </Form>
        </Panel>
        <PageEdge />
        <ScrollBar width={18} pad="17px 0 19px 1px" thumb={270} />
      </Body>
      <BottomEdge />
    </Window>
  );
}
